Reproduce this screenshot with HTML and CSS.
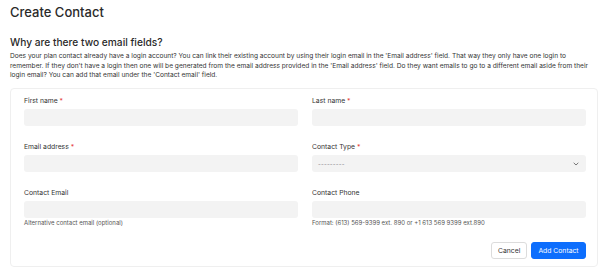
FILE: index.html
```html
<!DOCTYPE html>
<html lang="en">
<head>
<meta charset="utf-8">
<title>Create Contact</title>
<link rel="stylesheet" href="styles.css">
</head>
<body>
<div class="page">
  <h1 class="title">Create Contact</h1>
  <h2 class="subtitle">Why are there two email fields?</h2>
  <p class="intro">Does your plan contact already have a login account? You can link their existing account by using their login email in the 'Email address' field. That way they only have one login to remember. If they don't have a login then one will be generated from the email address provided in the 'Email address' field. Do they want emails to go to a different email aside from their login email? You can add that email under the 'Contact email' field.</p>
  <form class="card">
    <div class="grid">
      <div class="field">
        <label class="label">First name <span class="req">*</span></label>
        <div class="input"></div>
      </div>
      <div class="field">
        <label class="label">Last name <span class="req">*</span></label>
        <div class="input"></div>
      </div>
      <div class="field">
        <label class="label">Email address <span class="req">*</span></label>
        <div class="input"></div>
      </div>
      <div class="field">
        <label class="label">Contact Type <span class="req">*</span></label>
        <div class="input select">
          <span class="placeholder">---------</span>
          <svg class="chev" width="6" height="4" viewBox="0 0 6 4"><path d="M0.7 0.8 L3 3 L5.3 0.8" fill="none" stroke="#666" stroke-width="0.9"/></svg>
        </div>
      </div>
      <div class="field">
        <label class="label">Contact Email</label>
        <div class="input"></div>
        <div class="help">Alternative contact email (optional)</div>
      </div>
      <div class="field">
        <label class="label">Contact Phone</label>
        <div class="input"></div>
        <div class="help">Format: (613) 569-9399 ext. 890 or +1 613 569 9399 ext.890</div>
      </div>
    </div>
    <div class="actions">
      <button type="button" class="btn btn-cancel">Cancel</button>
      <button type="button" class="btn btn-primary">Add Contact</button>
    </div>
  </form>
</div>
</body>
</html>
```
FILE: styles.css
```css
html, body {
  margin: 0;
  padding: 0;
  background: #fff;
}
body {
  font-family: Inter, "Liberation Sans", sans-serif;
  color: #222;
}
.page {
  padding: 4px 2px 0 10px;
}
.title {
  margin: 0;
  font-size: 13px;
  line-height: 17px;
  font-weight: 500;
  color: #2a2a2a;
}
.subtitle {
  margin: 14px 0 0;
  font-size: 10.2px;
  line-height: 14px;
  font-weight: 500;
  color: #2a2a2a;
}
.intro {
  margin: 3px 0 0;
  font-size: 6.6px;
  line-height: 9.7px;
  color: #333;
}
.card {
  margin-top: 7px;
  border: 1px solid #efefef;
  border-radius: 4px;
  padding: 7px 11px 7px 13px;
}
.grid {
  display: grid;
  grid-template-columns: 1fr 1fr;
  column-gap: 14px;
  row-gap: 16px;
}
.field {
  display: flex;
  flex-direction: column;
}
.label {
  font-size: 6.8px;
  line-height: 9px;
  color: #333;
  margin-bottom: 4px;
}
.req {
  color: #e53935;
}
.input {
  height: 17px;
  background: #f3f3f3;
  border-radius: 3px;
}
.select {
  display: flex;
  align-items: center;
  justify-content: space-between;
  padding: 0 7px 0 6px;
}
.placeholder {
  font-size: 6px;
  color: #888;
  letter-spacing: 0.2px;
}
.chev {
  display: block;
}
.help {
  margin-top: 1px;
  font-size: 6px;
  line-height: 8px;
  color: #555;
}
.actions {
  display: flex;
  justify-content: flex-end;
  gap: 4px;
  margin-top: 15px;
}
.btn {
  height: 17px;
  font-family: Inter, "Liberation Sans", sans-serif;
  font-size: 6.8px;
  border-radius: 3px;
  padding: 0 6px;
  cursor: pointer;
}
.btn-cancel {
  background: #fff;
  border: 1px solid #dcdcdc;
  color: #333;
  width: 36px;
}
.btn-primary {
  background: #0d6efd;
  border: 1px solid #0d6efd;
  color: #fff;
  width: 55px;
}
```
